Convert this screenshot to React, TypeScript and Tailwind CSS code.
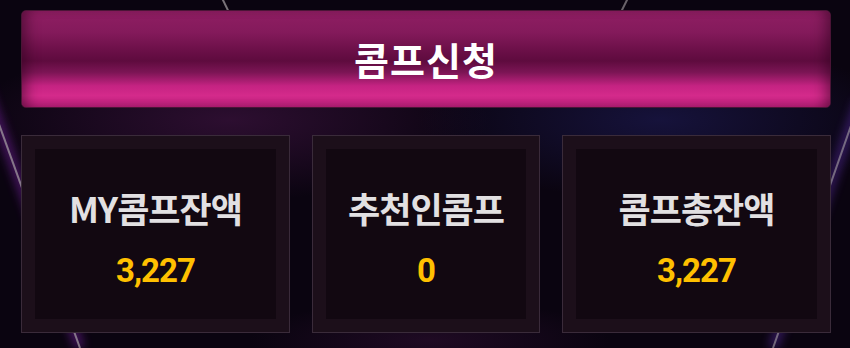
import React from 'react';

const STATS = [
  { label: 'MY콤프잔액', value: '3,227', width: 'w-[269px]' },
  { label: '추천인콤프', value: '0', width: 'w-[228px]' },
  { label: '콤프총잔액', value: '3,227', width: 'w-[269px]' },
];

function Backdrop() {
  return (
    <svg className="absolute inset-0 pointer-events-none" width="850" height="348" viewBox="0 0 850 348">
      <defs>
        <radialGradient id="gPink" cx="0.5" cy="0.5" r="0.5">
          <stop offset="0%" stopColor="#331036" stopOpacity="0.85" />
          <stop offset="100%" stopColor="#331036" stopOpacity="0" />
        </radialGradient>
        <radialGradient id="gBlue" cx="0.5" cy="0.5" r="0.5">
          <stop offset="0%" stopColor="#191646" stopOpacity="0.8" />
          <stop offset="100%" stopColor="#191646" stopOpacity="0" />
        </radialGradient>
        <filter id="blur" x="-50%" y="-50%" width="200%" height="200%">
          <feGaussianBlur stdDeviation="5" />
        </filter>
      </defs>
      <ellipse cx="230" cy="120" rx="260" ry="80" fill="url(#gPink)" />
      <ellipse cx="660" cy="120" rx="240" ry="80" fill="url(#gBlue)" />
      <ellipse cx="430" cy="340" rx="180" ry="40" fill="url(#gPink)" opacity="0.6" />
      {/* glow around the light streaks */}
      <line x1="-46" y1="0" x2="80" y2="348" stroke="#9a2bd0" strokeWidth="10" opacity="0.4" filter="url(#blur)" />
      <line x1="860" y1="100" x2="773" y2="348" stroke="#7a3be0" strokeWidth="10" opacity="0.35" filter="url(#blur)" />
      <line x1="-46" y1="0" x2="80" y2="348" stroke="#a9a3a6" strokeWidth="2" opacity="0.7" />
      <line x1="860" y1="100" x2="773" y2="348" stroke="#a9a3a6" strokeWidth="2" opacity="0.6" />
      <line x1="221" y1="-4" x2="262" y2="80" stroke="#a9a3a6" strokeWidth="2" opacity="0.7" />
      <line x1="628" y1="-2" x2="612" y2="30" stroke="#a9a3a6" strokeWidth="2" opacity="0.6" />
    </svg>
  );
}

export default function App() {
  return (
    <div className="relative w-[850px] h-[348px] overflow-hidden bg-[#0a0410] font-['Noto_Sans_CJK_KR',sans-serif]">
      <Backdrop />
      <div className="relative flex flex-col pt-[10px] pl-[21px] pr-[19px]">
        <button className="h-[98px] w-full rounded-[5px] border border-[#4a1436] bg-[linear-gradient(to_bottom,#8f1e63_0%,#841a5b_22%,#6a0f47_42%,#5e0b3e_52%,#7c1555_64%,#c52382_78%,#d42a8b_88%,#b81f78_100%)] shadow-[inset_12px_0_14px_-8px_rgba(40,0,25,0.55),inset_-12px_0_14px_-8px_rgba(40,0,25,0.55)] flex items-center justify-center">
          <span className="text-white text-[38px] font-bold leading-none tracking-[1px]">콤프신청</span>
        </button>

        <div className="mt-[27px] flex gap-[22px]">
          {STATS.map((s) => (
            <div key={s.label} className={`${s.width} h-[198px] border border-[#3a2b3a] bg-[#1c0f1a] p-[13px]`}>
              <div className="h-full bg-[#120811] flex flex-col items-center justify-center pt-[8px]">
                <span className="text-[#e2e0e2] text-[35px] font-bold leading-none tracking-[-1px]">{s.label}</span>
                <span className="mt-[29px] text-[#ffc000] text-[33px] font-bold leading-none tracking-[-1px] font-['Roboto',sans-serif]">
                  {s.value}
                </span>
              </div>
            </div>
          ))}
        </div>
      </div>
    </div>
  );
}
